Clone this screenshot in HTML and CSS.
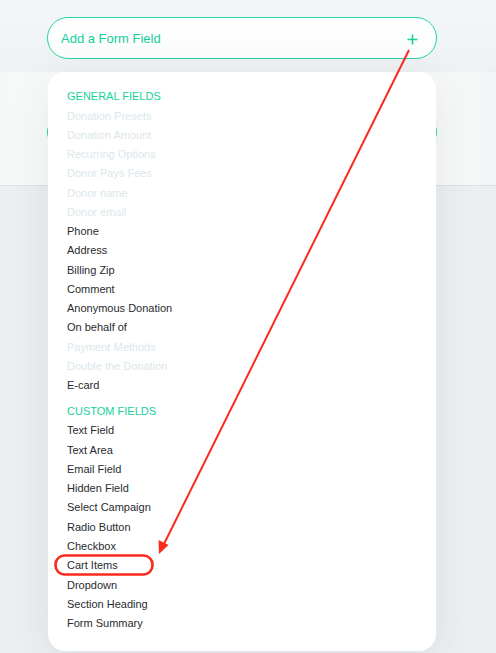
FILE: index.html
```html
<!DOCTYPE html>
<html>
<head>
<meta charset="utf-8">
<link rel="stylesheet" href="styles.css">
</head>
<body>
<div class="page">
  <header class="top">
    <button class="add-btn">
      <span>Add a Form Field</span>
      <svg class="plus" width="11" height="11" viewBox="0 0 11 11"><path d="M5.5 0.5V10.5M0.5 5.5H10.5" stroke="#16cf9c" stroke-width="1.6" fill="none"/></svg>
    </button>
  </header>
  <section class="card">
    <div class="pill"></div>
  </section>

  <div class="menu">
    <div class="group">
      <div class="group-title">GENERAL FIELDS</div>
      <div class="item off">Donation Presets</div>
      <div class="item off">Donation Amount</div>
      <div class="item off">Recurring Options</div>
      <div class="item off">Donor Pays Fees</div>
      <div class="item off">Donor name</div>
      <div class="item off">Donor email</div>
      <div class="item">Phone</div>
      <div class="item">Address</div>
      <div class="item">Billing Zip</div>
      <div class="item">Comment</div>
      <div class="item">Anonymous Donation</div>
      <div class="item">On behalf of</div>
      <div class="item off">Payment Methods</div>
      <div class="item off">Double the Donation</div>
      <div class="item">E-card</div>
    </div>
    <div class="group custom">
      <div class="group-title">CUSTOM FIELDS</div>
      <div class="item">Text Field</div>
      <div class="item">Text Area</div>
      <div class="item">Email Field</div>
      <div class="item">Hidden Field</div>
      <div class="item">Select Campaign</div>
      <div class="item">Radio Button</div>
      <div class="item">Checkbox</div>
      <div class="item">Cart Items</div>
      <div class="item">Dropdown</div>
      <div class="item">Section Heading</div>
      <div class="item">Form Summary</div>
    </div>
  </div>

  <svg class="annot" width="496" height="653" viewBox="0 0 496 653">
    <line x1="409" y1="50" x2="163.5" y2="545" stroke="#fa2a1e" stroke-width="2"/>
    <polygon points="159,554 158.5,540 168.5,545" fill="#fa2a1e"/>
    <rect x="55.5" y="555.5" width="97" height="19" rx="9" ry="9" fill="none" stroke="#fa2a1e" stroke-width="2.6"/>
  </svg>
</div>
</body>
</html>
```

FILE: styles.css
```css
* { box-sizing: border-box; }
html, body { margin: 0; padding: 0; }
body {
  background: #eceff1;
  font-family: "Liberation Sans", Arial, Helvetica, sans-serif;
  width: 496px;
  height: 653px;
  overflow: hidden;
}
.page {
  position: relative;
  width: 496px;
  height: 653px;
}
.top {
  height: 72px;
  background: linear-gradient(180deg, #f4f7f8 0%, #eff2f3 100%);
  border-bottom-right-radius: 7px;
  padding: 17px 0 0 47px;
}
.add-btn {
  width: 390px;
  height: 42px;
  border: 1px solid #22d4a4;
  border-radius: 21px;
  background: linear-gradient(180deg, #ffffff 0%, #fbfcfc 100%);
  display: flex;
  align-items: center;
  justify-content: space-between;
  padding: 0 18px 0 13px;
  font-family: inherit;
  font-size: 13px;
  color: #14cf9c;
  cursor: pointer;
}
.plus { display: block; margin-top: 2px; }
.card {
  height: 114px;
  background: linear-gradient(90deg, #f6f8f8 0%, #ffffff 30%, #ffffff 70%, #f3f5f6 100%);
  border-bottom: 1px solid #dbe2e6;
  padding: 45px 0 0 47px;
}
.pill {
  width: 390px;
  height: 30px;
  border: 2px solid #22d4a4;
  border-radius: 15px;
  background: #fff;
}
.menu {
  position: absolute;
  left: 48px;
  top: 72px;
  width: 388px;
  height: 579px;
  background: #fff;
  border-radius: 17px;
  box-shadow: 0 6px 40px rgba(40, 60, 70, 0.09);
  padding: 15.3px 0 0 19px;
  font-size: 11px;
  line-height: 19.27px;
}
.group-title {
  color: #17d09e;
  font-size: 11px;
}
.item { color: #272c2f; }
.item.off { color: #dce7eb; }
.custom { margin-top: 6.6px; }
.annot {
  position: absolute;
  left: 0;
  top: 0;
  pointer-events: none;
}
```
